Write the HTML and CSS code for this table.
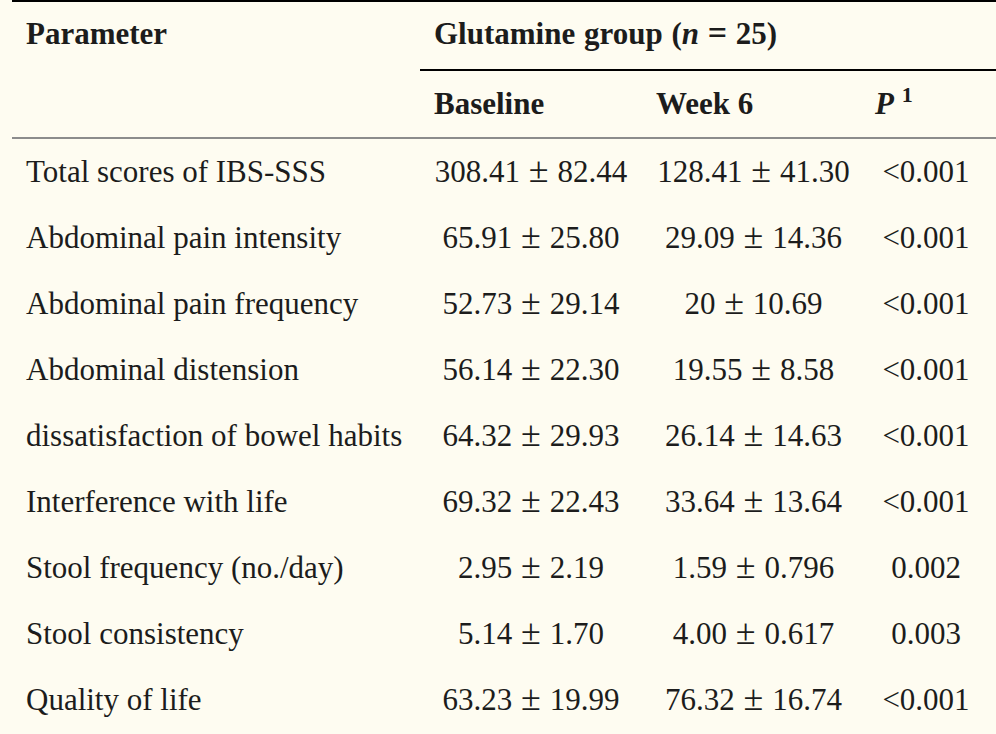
FILE: index.html
```html
<!DOCTYPE html>
<html lang="en">
<head>
<meta charset="utf-8">
<title>Glutamine group table</title>
<link rel="stylesheet" href="styles.css">
</head>
<body>
<div class="wrap">
<table class="data">
  <colgroup>
    <col class="c-param">
    <col class="c-base">
    <col class="c-week">
    <col class="c-p">
  </colgroup>
  <thead>
    <tr class="hrow1">
      <th class="param" rowspan="2">Parameter</th>
      <th class="group" colspan="3">Glutamine group (<i>n</i> <span class="eq">=</span> 25)</th>
    </tr>
    <tr class="hrow2">
      <th>Baseline</th>
      <th>Week 6</th>
      <th class="pcol"><i>P</i> <sup>1</sup></th>
    </tr>
  </thead>
  <tbody>
    <tr><td>Total scores of IBS-SSS</td><td>308.41 <span class="pm">±</span> 82.44</td><td>128.41 <span class="pm">±</span> 41.30</td><td class="pv">&lt;0.001</td></tr>
    <tr><td>Abdominal pain intensity</td><td>65.91 <span class="pm">±</span> 25.80</td><td>29.09 <span class="pm">±</span> 14.36</td><td class="pv">&lt;0.001</td></tr>
    <tr><td>Abdominal pain frequency</td><td>52.73 <span class="pm">±</span> 29.14</td><td>20 <span class="pm">±</span> 10.69</td><td class="pv">&lt;0.001</td></tr>
    <tr><td>Abdominal distension</td><td>56.14 <span class="pm">±</span> 22.30</td><td>19.55 <span class="pm">±</span> 8.58</td><td class="pv">&lt;0.001</td></tr>
    <tr><td>dissatisfaction of bowel habits</td><td>64.32 <span class="pm">±</span> 29.93</td><td>26.14 <span class="pm">±</span> 14.63</td><td class="pv">&lt;0.001</td></tr>
    <tr><td>Interference with life</td><td>69.32 <span class="pm">±</span> 22.43</td><td>33.64 <span class="pm">±</span> 13.64</td><td class="pv">&lt;0.001</td></tr>
    <tr><td>Stool frequency (no./day)</td><td>2.95 <span class="pm">±</span> 2.19</td><td>1.59 <span class="pm">±</span> 0.796</td><td class="pv">0.002</td></tr>
    <tr><td>Stool consistency</td><td>5.14 <span class="pm">±</span> 1.70</td><td>4.00 <span class="pm">±</span> 0.617</td><td class="pv">0.003</td></tr>
    <tr><td>Quality of life</td><td>63.23 <span class="pm">±</span> 19.99</td><td>76.32 <span class="pm">±</span> 16.74</td><td class="pv">&lt;0.001</td></tr>
  </tbody>
</table>
</div>
</body>
</html>
```
FILE: styles.css
```css
html, body {
  margin: 0;
  padding: 0;
  background: #fefcf1;
}
body {
  width: 996px;
  height: 734px;
  overflow: hidden;
  font-family: "Liberation Serif", "Times New Roman", serif;
  color: #1c1c1c;
}
.wrap {
  padding-left: 12px;
}
.data {
  border-collapse: collapse;
  table-layout: fixed;
  width: 991px;
  border-top: 2px solid #000;
  font-size: 31px;
  line-height: 34px;
}
.c-param { width: 408px; }
.c-base { width: 222px; }
.c-week { width: 223px; }
.c-p { width: 138px; }

.data th,
.data td {
  padding: 16px 14px 16px;
  white-space: nowrap;
  vertical-align: top;
}
.data th {
  font-weight: bold;
  text-align: left;
}
.data td {
  text-align: center;
  word-spacing: 1px;
}
.data td:first-child {
  text-align: left;
  word-spacing: 0;
}
.pm {
  font-size: 36px;
  line-height: 0;
}
.eq {
  font-size: 34px;
  line-height: 0;
}
.data td.pv,
.data th.pcol {
  padding-right: 30px;
}
.hrow1 th {
  padding-top: 15px;
  padding-bottom: 18px;
}
.data th.group {
  border-bottom: 2px solid #000;
  word-spacing: 1px;
}
.data th.param {
  border-bottom: 2px solid #8c8c8c;
}
.hrow2 th {
  border-bottom: 2px solid #8c8c8c;
}
.data i {
  font-style: italic;
}
.pcol i {
  margin-left: -4px;
}
.pcol sup {
  font-size: 22px;
  line-height: 0;
  vertical-align: 12px;
}
```
